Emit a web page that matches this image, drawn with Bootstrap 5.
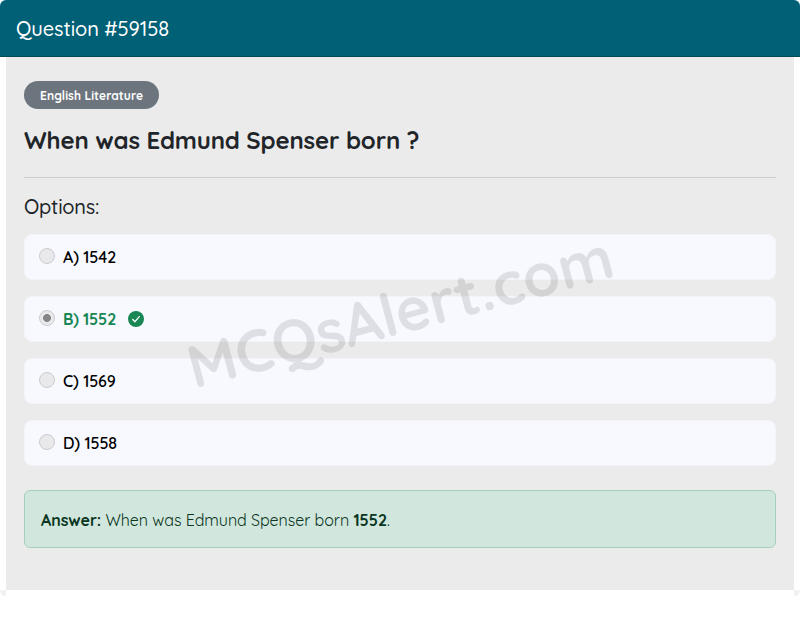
<!DOCTYPE html>
<html lang="en">
<head>
<meta charset="utf-8">
<meta name="viewport" content="width=device-width, initial-scale=1">
<title>Question #59158</title>
<link href="https://cdn.jsdelivr.net/npm/bootstrap@5.3.0/dist/css/bootstrap.min.css" rel="stylesheet">
<style>
body{font-family:Quicksand,Lato,"Open Sans",sans-serif;color:#212529;background:#fff;overflow:hidden}
.q-card{border:0;border-radius:6px;background:transparent}
.q-head{background:#006075;border-bottom:1px solid #004a5c;height:57px;border-radius:6px 6px 0 0!important;padding:2px 16px 0}
.q-head h1{font-size:20px;font-weight:500;line-height:24px;letter-spacing:-.08px}
.q-body{background:#ebebeb;margin:0 6px;padding:24px 18px 0;height:533px;flex:none}
.q-badge{height:28px;width:135px;padding:2px 16px 0;font-size:12px;font-weight:700;letter-spacing:.06px;background:#6c757d}
.q-title{font-size:24px;font-weight:700;line-height:29px;margin:17px 0 22px;letter-spacing:-.15px}
.q-rule{margin:0 0 17px;border-top:1px solid #212529;opacity:.15}
.q-sub{font-size:20px;font-weight:500;line-height:24px;margin:0 0 15px;letter-spacing:-.22px}
.q-opt{height:46px;border-radius:8px;background:#f8f9fe;border:1px solid #f3f4f8;padding:0 14px;margin-bottom:16px;color:#000;font-weight:600;letter-spacing:-.1px}
.q-opt .form-check-input{width:16px;height:16px;margin:-2px 8px 0 0;opacity:1;background:#e9e9eb;border:1px solid #cacbcd}
.q-opt .form-check-input:checked{background:radial-gradient(circle,#858585 0 3.6px,#e9e9eb 4.3px)}
.q-opt.right{color:#198754;font-weight:700;letter-spacing:-.2px}
.q-opt svg{margin-left:12px}
.q-answer{height:58px;border:1px solid #a3cfbb;background:#d1e7dd;color:#0a3622;border-radius:6px;margin:24px 0 0;padding:2px 16px 0;font-size:16px;letter-spacing:-.06px}
.q-answer p{font-weight:400}
.q-foot{height:6px}
.q-foot i{width:6px;height:6px;background:#f1f1f1}
.q-foot i:first-child{border-bottom-left-radius:6px}
.q-foot i:last-child{border-bottom-right-radius:6px}
.q-mark{left:0;top:0;pointer-events:none}
</style>
</head>
<body>
<main class="card q-card position-relative">
  <header class="card-header q-head d-flex align-items-center text-white"><h1 class="m-0">Question #59158</h1></header>
  <section class="q-body">
    <div class="d-flex"><span class="badge rounded-pill q-badge d-inline-flex align-items-center">English Literature</span></div>
    <h2 class="q-title">When was Edmund Spenser born ?</h2>
    <hr class="q-rule">
    <h3 class="q-sub">Options:</h3>
    <div class="q-opt d-flex align-items-center"><input class="form-check-input" type="radio" disabled><span>A) 1542</span></div>
    <div class="q-opt right d-flex align-items-center"><input class="form-check-input" type="radio" checked disabled><span>B) 1552</span>
      <svg width="16" height="16" viewBox="0 0 16 16"><circle cx="8" cy="8" r="8" fill="#198754"/><path d="M4.7 8.5 7 10.7 11.3 5.6" fill="none" stroke="#fff" stroke-width="1.3" stroke-linecap="round" stroke-linejoin="round"/></svg></div>
    <div class="q-opt d-flex align-items-center"><input class="form-check-input" type="radio" disabled><span>C) 1569</span></div>
    <div class="q-opt d-flex align-items-center"><input class="form-check-input" type="radio" disabled><span>D) 1558</span></div>
    <div class="q-answer d-flex align-items-center"><p class="m-0"><strong>Answer:</strong> When was Edmund Spenser born <strong>1552</strong>.</p></div>
  </section>
  <footer class="q-foot d-flex justify-content-between"><i></i><i></i></footer>
  <svg class="q-mark position-absolute" width="800" height="600" viewBox="0 0 800 600"><text transform="translate(194 389) rotate(-14.9)" x="0" y="0" font-size="60" font-weight="700" letter-spacing="-.15" fill="#000" fill-opacity=".1">MCQsAlert.com</text></svg>
</main>
<script src="https://cdn.jsdelivr.net/npm/bootstrap@5.3.0/dist/js/bootstrap.bundle.min.js"></script>
</body>
</html>
